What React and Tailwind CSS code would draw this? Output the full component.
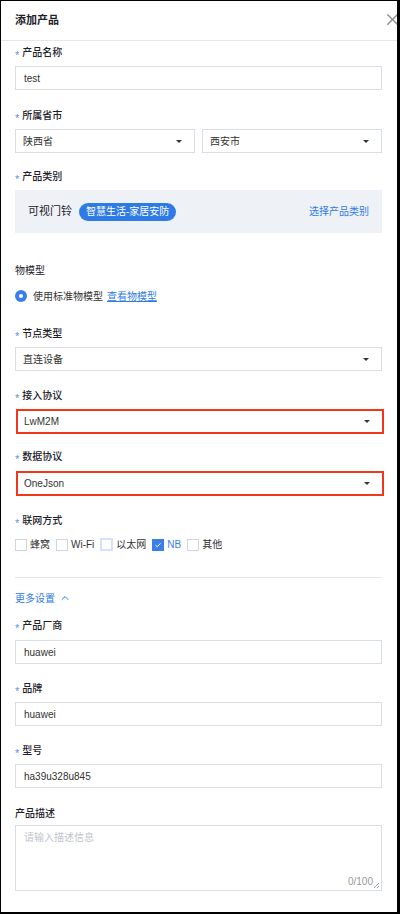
import { ChevronUp, X } from 'lucide-react'

const font = { fontFamily: '"Liberation Sans", "Noto Sans CJK SC", sans-serif' }

function Label({ text, required = true, className = '' }) {
  return (
    <div className={`flex h-4 items-center text-[10px] font-medium text-[#1d2129] ${className}`}>
      {required && <span className="mr-[3px] mt-[6px] text-[11px] leading-none text-[#5b8fe6]">*</span>}
      {text}
    </div>
  )
}

function Input({ value, className = '' }) {
  return (
    <div className={`flex h-6 items-center border border-[#d9dde4] bg-white pl-[8px] text-[10px] text-[#333] ${className}`}>
      {value}
    </div>
  )
}

function Caret() {
  return <span className="h-0 w-0 border-x-[3px] border-t-[3px] border-x-transparent border-t-[#333]" />
}

function Select({ value, red = false, className = '' }) {
  return (
    <div
      className={`flex items-center justify-between bg-white pr-[12px] text-[10px] text-[#333] ${
        red ? 'h-[25px] border-2 border-[#f2361c] pl-[6px]' : 'h-6 border border-[#d9dde4] pl-[7px]'
      } ${className}`}
    >
      <span>{value}</span>
      <Caret />
    </div>
  )
}

function Check({ label, checked = false, focus = false }) {
  return (
    <div className="flex items-center gap-[3px]">
      {checked ? (
        <span className="flex h-3 w-3 items-center justify-center bg-[#3a7fe8]">
          <svg width="8" height="8" viewBox="0 0 8 8">
            <path d="M1.5 4.2 3.2 5.8 6.5 2.3" fill="none" stroke="white" strokeWidth="1" />
          </svg>
        </span>
      ) : focus ? (
        <span className="h-[13px] w-[13px] border-2 border-[#d3e2f8] bg-white" />
      ) : (
        <span className="h-3 w-3 border border-[#d0d4db] bg-white" />
      )}
      <span className={`text-[10px] ${checked ? 'text-[#3a7fe8]' : 'text-[#333]'}`}>{label}</span>
    </div>
  )
}

export default function App() {
  return (
    <div style={font} className="h-[914px] w-[400px] overflow-hidden border-t border-b-2 border-l border-r-[3px] border-black bg-white">
      <header className="relative flex h-10 items-center border-b border-[#e4e7ec] px-[14px]">
        <h1 className="text-[11px] font-bold text-[#1d2129]">添加产品</h1>
        <X className="absolute right-[-5px] top-[9px] h-[19px] w-[19px] text-[#8f8f8f]" strokeWidth={1.8} />
      </header>

      <main className="pl-[14px] pr-[15px] pt-[2px]">
        <Label text="产品名称" className="mt-[1px]" />
        <Input value="test" className="mt-[6px]" />

        <Label text="所属省市" className="mt-[17px]" />
        <div className="mt-[6px] grid grid-cols-2 gap-[7px]">
          <Select value="陕西省" />
          <Select value="西安市" />
        </div>

        <Label text="产品类别" className="mt-[15px]" />
        <div className="mt-[6px] flex h-[43px] items-center justify-between bg-[#eef1f6] px-[13px]">
          <div className="flex items-center gap-[7px]">
            <span className="text-[11px] text-[#1d2129]">可视门铃</span>
            <span className="flex h-[18px] items-center rounded-full bg-[#2f7be6] px-[7px] text-[10px] text-white">
              智慧生活-家居安防
            </span>
          </div>
          <span className="text-[10px] text-[#2f7be6]">选择产品类别</span>
        </div>

        <div className="mt-[29px] flex h-4 items-center text-[10px] text-[#1d2129]">物模型</div>
        <div className="mt-[10px] flex h-4 items-center text-[10px]">
          <span className="flex h-3 w-3 items-center justify-center rounded-full bg-[#3a7fe8]">
            <span className="h-1 w-1 rounded-full bg-white" />
          </span>
          <span className="ml-[6px] text-[#333]">使用标准物模型</span>
          <span className="ml-[4px] text-[#2f7be6] underline">查看物模型</span>
        </div>

        <Label text="节点类型" className="mt-[21px]" />
        <Select value="直连设备" className="mt-[6px]" />

        <Label text="接入协议" className="mt-[16px]" />
        <Select value="LwM2M" red className="ml-[1px] mr-[-2px] mt-[6px]" />

        <Label text="数据协议" className="mt-[14px]" />
        <Select value="OneJson" red className="ml-[1px] mr-[-2px] mt-[7px]" />

        <Label text="联网方式" className="mt-[16px]" />
        <div className="mt-[8px] flex h-[17px] items-center gap-[6px]">
          <Check label="蜂窝" />
          <Check label="Wi-Fi" />
          <Check label="以太网" focus />
          <Check label="NB" checked />
          <Check label="其他" />
        </div>

        <div className="mt-[24px] h-px bg-[#e4e7ec]" />

        <div className="mt-[12px] flex h-4 items-center gap-[4px] text-[10px] text-[#2f7be6]">
          更多设置
          <ChevronUp className="h-3 w-3" strokeWidth={2} />
        </div>

        <Label text="产品厂商" className="mt-[11px]" />
        <Input value="huawei" className="mt-[7px]" />

        <Label text="品牌" className="mt-[16px]" />
        <Input value="huawei" className="mt-[6px]" />

        <Label text="型号" className="mt-[16px]" />
        <Input value="ha39u328u845" className="mt-[6px]" />

        <Label text="产品描述" required={false} className="mt-[17px]" />
        <div className="relative mt-[4px] h-[66px] border border-[#d9dde4] bg-white">
          <span className="absolute left-[8px] top-[4px] text-[10px] text-[#c0c4cc]">请输入描述信息</span>
          <span className="absolute bottom-[1px] right-[8px] text-[10px] text-[#999]">0/100</span>
          <svg className="absolute bottom-[1px] right-[1px]" width="7" height="7" viewBox="0 0 7 7">
            <path d="M6 1 1 6M6 4 4 6" stroke="#888" strokeWidth="0.8" />
          </svg>
        </div>
      </main>
    </div>
  )
}
